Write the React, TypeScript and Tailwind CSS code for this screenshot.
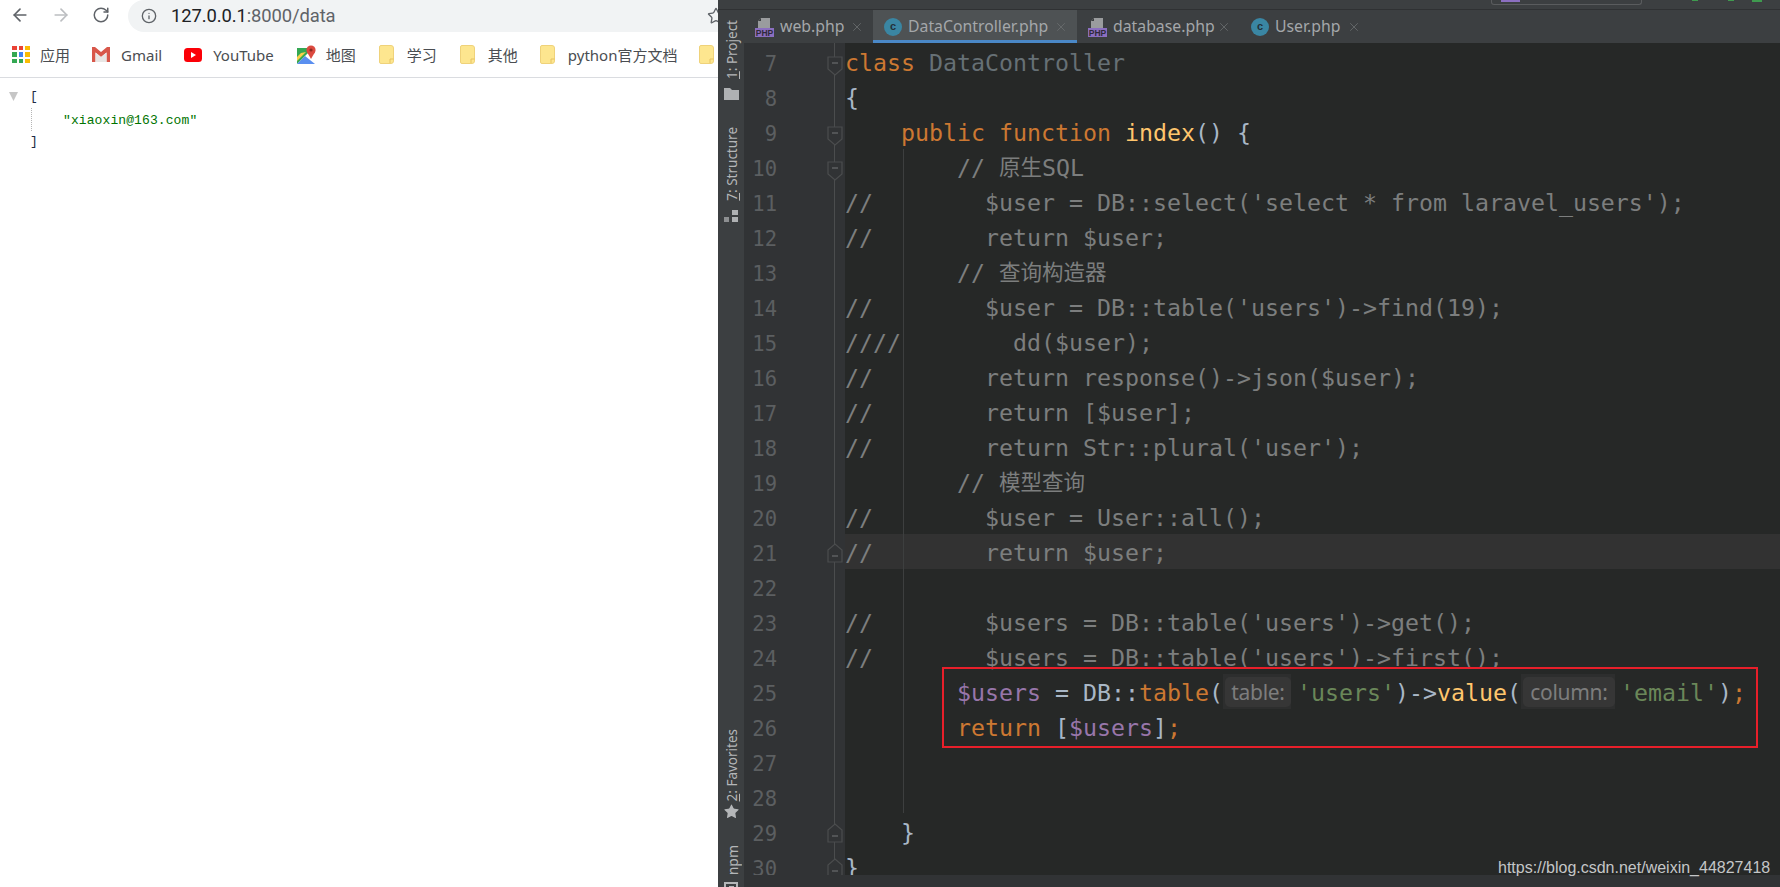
import React from 'react';
import { ArrowLeft, ArrowRight, RotateCw, Info, Star, X } from 'lucide-react';

type Token = [string, string];

const CM = 'text-[#7c7e7e]';
const KW = 'text-[#cc7832]';
const CL = 'text-[#667075]';
const FN = 'text-[#ffc66d]';
const OP = 'text-[#a9b7c6]';
const VR = 'text-[#9876aa]';
const ST = 'text-[#6a8759]';
const CJK = 'text-[21.5px] text-[#7c7e7e]';

const comment = (text: string): Token[] => [[CM, text]];

const codeLines: { n: number; tokens: Token[]; fold?: 'open' | 'close' }[] = [
  { n: 7, fold: 'open', tokens: [[KW, 'class '], [CL, 'DataController']] },
  { n: 8, tokens: [[OP, '{']] },
  { n: 9, fold: 'open', tokens: [[KW, '    public function '], [FN, 'index'], [OP, '() {']] },
  { n: 10, fold: 'open', tokens: [[CM, '        // '], [CJK, '原生'], [CM, 'SQL']] },
  { n: 11, tokens: comment("//        $user = DB::select('select * from laravel_users');") },
  { n: 12, tokens: comment('//        return $user;') },
  { n: 13, tokens: [[CM, '        // '], [CJK, '查询构造器']] },
  { n: 14, tokens: comment("//        $user = DB::table('users')->find(19);") },
  { n: 15, tokens: comment('////        dd($user);') },
  { n: 16, tokens: comment('//        return response()->json($user);') },
  { n: 17, tokens: comment('//        return [$user];') },
  { n: 18, tokens: comment("//        return Str::plural('user');") },
  { n: 19, tokens: [[CM, '        // '], [CJK, '模型查询']] },
  { n: 20, tokens: comment('//        $user = User::all();') },
  { n: 21, fold: 'close', tokens: comment('//        return $user;') },
  { n: 22, tokens: [] },
  { n: 23, tokens: comment("//        $users = DB::table('users')->get();") },
  { n: 24, tokens: comment("//        $users = DB::table('users')->first();") },
  {
    n: 25,
    tokens: [
      [VR, '        $users'],
      [OP, ' = DB::'],
      [KW, 'table'],
      [OP, '('],
      ['inlay-table', 'table:'],
      [ST, "'users'"],
      [OP, ')->'],
      [FN, 'value'],
      [OP, '('],
      ['inlay-column', 'column:'],
      [ST, "'email'"],
      [OP, ')'],
      [KW, ';'],
    ],
  },
  { n: 26, tokens: [[KW, '        return '], [OP, '['], [VR, '$users'], [OP, ']'], [KW, ';']] },
  { n: 27, tokens: [] },
  { n: 28, tokens: [] },
  { n: 29, fold: 'close', tokens: [[OP, '    }']] },
  { n: 30, fold: 'close', tokens: [[OP, '}']] },
];

const FoldIcon = ({ kind }: { kind: 'open' | 'close' }) =>
  kind === 'open' ? (
    <svg width="16" height="20" viewBox="0 0 16 20" className="mt-[12px] ml-[50px]">
      <path d="M1 1H15V13L8 19L1 13Z" fill="#313335" stroke="#4b4d4e" strokeWidth="1.2" />
      <path d="M5 7H11" stroke="#6a6c6d" strokeWidth="1.2" />
    </svg>
  ) : (
    <svg width="16" height="20" viewBox="0 0 16 20" className="mt-[9px] ml-[50px]">
      <path d="M1 19H15V7L8 1L1 7Z" fill="#313335" stroke="#4b4d4e" strokeWidth="1.2" />
      <path d="M5 13H11" stroke="#6a6c6d" strokeWidth="1.2" />
    </svg>
  );

const PhpIcon = () => (
  <div className="relative h-[20px] w-[19px] shrink-0">
    <svg width="19" height="20" viewBox="0 0 19 20">
      <path d="M6 1H15V12H3V4Z" fill="#9a9c9e" />
      <path d="M6 1V4H3Z" fill="#3c3f41" />
      <rect x="0" y="11" width="19" height="9" fill="#8b6fc0" />
      <text x="9.5" y="19" textAnchor="middle" fontSize="8.5" fontFamily="'Liberation Sans', sans-serif" fontWeight="700" fill="#2f2a3a">
        PHP
      </text>
    </svg>
  </div>
);

const ClassIcon = () => (
  <div className="flex h-[18px] w-[18px] shrink-0 items-center justify-center rounded-full bg-[#3a86a3] text-[11px] leading-none font-bold text-[#23313a] [font-family:'Liberation_Sans',sans-serif]">
    c
  </div>
);

const Tab = ({ label, php, active, width }: { label: string; php?: boolean; active?: boolean; width: string }) => (
  <div
    className={`flex h-full items-center justify-between pr-[9px] pl-[11px] ${width} ${
      active ? 'border-b-[3px] border-[#4a88c7] bg-[#4e5254] pt-[3px]' : ''
    }`}
  >
    <div className="flex items-center gap-[6px]">
      {php ? <PhpIcon /> : <ClassIcon />}
      <span className="text-[15.8px] text-[#a4a7aa]">{label}</span>
    </div>
    <X size={14} strokeWidth={1.4} className="text-[#6b6e70]" />
  </div>
);

const VerticalLabel = ({ num, text }: { num: string; text: string }) => (
  <span className="ml-[4px] shrink-0 rotate-180 text-[13.5px] leading-none whitespace-nowrap text-[#b4b6b8] [writing-mode:vertical-rl]">
    <span className="underline">{num}</span>
    {text}
  </span>
);

const Sidebar = () => (
  <div className="flex h-[877px] w-[26px] shrink-0 flex-col items-center overflow-hidden bg-[#3c3f41] pt-[10px]">
    <VerticalLabel num="1" text=": Project" />
    <svg width="15" height="12" viewBox="0 0 15 12" className="mt-[9px] shrink-0">
      <path d="M0 0H6L8 2H15V12H0Z" fill="#afb1b3" />
    </svg>
    <div className="mt-[27px] flex shrink-0">
      <VerticalLabel num="7" text=": Structure" />
    </div>
    <svg width="14" height="12" viewBox="0 0 14 12" className="mt-[9px] shrink-0">
      <rect x="8" y="0" width="6" height="5" fill="#afb1b3" />
      <rect x="0" y="7" width="5" height="5" fill="#8d8f91" />
      <rect x="8" y="7" width="6" height="5" fill="#afb1b3" />
    </svg>
    <div className="mt-[507px] flex shrink-0">
      <VerticalLabel num="2" text=": Favorites" />
    </div>
    <Star size={17} fill="#b4b6b8" strokeWidth={0} className="mt-[2px] shrink-0 text-[#b4b6b8]" />
    <div className="mt-[25px] flex shrink-0">
      <span className="ml-[4px] rotate-180 text-[14px] leading-none text-[#b4b6b8] [writing-mode:vertical-rl]">npm</span>
    </div>
    <div className="mt-[6px] flex h-[14px] w-[14px] shrink-0 items-center justify-center border-2 border-[#b4b6b8]">
      <div className="h-[5px] w-[5px] bg-[#b4b6b8]" />
    </div>
  </div>
);

const Inlay = ({ label, outer, inner }: { label: string; outer: string; inner: string }) => (
  <span className={`flex h-[35px] items-start ${outer}`}>
    <span className="flex h-[35px] items-start bg-[#2d2e2e] pt-[3px] pl-[2px]">
      <span
        className={`flex h-[30px] items-center justify-center rounded-[5px] bg-[#363636] text-[21px] tracking-[-0.3px] text-[#7d7d7d] [font-family:'Noto_Sans',sans-serif] ${inner}`}
      >
        {label}
      </span>
    </span>
  </span>
);

const CodeRow = ({ n, tokens }: { n: number; tokens: Token[] }) => (
  <div
    className={`flex h-[35px] items-start text-[23.25px] leading-[35px] whitespace-pre ${
      n === 21 ? 'bg-[#323232]' : ''
    }`}
  >
    {tokens.map(([cls, text], i) => {
      if (cls === 'inlay-table') return <Inlay key={i} label={text} outer="w-[74px]" inner="w-[66px]" />;
      if (cls === 'inlay-column') return <Inlay key={i} label={text} outer="w-[99px]" inner="w-[92px]" />;
      return (
        <span key={i} className={`mt-px ${cls}`}>
          {text}
        </span>
      );
    })}
  </div>
);

const Editor = () => (
  <div className="flex min-h-0 flex-1 overflow-hidden bg-[#262827] [font-family:'DejaVu_Sans_Mono','Noto_Sans_CJK_SC',monospace]">
    <div className="relative w-[101px] shrink-0 bg-[#313335] pt-px">
      <div className="absolute top-0 bottom-0 left-[90px] w-px bg-[#4b4d4e]" />
      {codeLines.map(l => (
        <div key={l.n} className="relative flex h-[35px] items-start">
          <span className="mt-[3px] w-[33px] text-right text-[20.5px] leading-[35px] text-[#5c5f61]">{l.n}</span>
          {l.fold && <FoldIcon kind={l.fold} />}
        </div>
      ))}
    </div>
    <div className="relative flex-1 pt-px">
      {codeLines.map(l => (
        <CodeRow key={l.n} n={l.n} tokens={l.tokens} />
      ))}
      <div className="absolute top-[106px] left-[58px] h-[664px] w-px bg-[#3d3f3f]" />
    </div>
  </div>
);

const Ide = () => (
  <div className="flex h-full min-w-0 flex-1 flex-col bg-[#3c3f41] [font-family:'Noto_Sans',sans-serif]">
    <div className="flex h-[10px] shrink-0 items-start justify-end border-b border-[#2f3133] pr-[18px]">
      <div className="flex h-[5px] w-[151px] items-end rounded-b-[3px] border-r border-b border-l border-[#5a5c5e] pl-[9px]">
        <div className="mb-[2px] h-[2px] w-[19px] bg-[#8b6fc0]" />
      </div>
      <div className="ml-[50px] h-px w-[6px] bg-[#3f9a4f]" />
      <div className="ml-[30px] h-px w-[6px] bg-[#3f9a4f]" />
      <div className="ml-[18px] h-[2px] w-[10px] bg-[#3f9a4f]" />
    </div>
    <div className="flex min-h-0 flex-1">
      <Sidebar />
      <div className="flex min-w-0 flex-1 flex-col">
        <div className="flex h-[33px] shrink-0 bg-[#3c3f41]">
          <Tab label="web.php" php width="w-[129px]" />
          <Tab label="DataController.php" active width="w-[204px]" />
          <Tab label="database.php" php width="w-[163px]" />
          <Tab label="User.php" width="w-[130px]" />
        </div>
        <Editor />
        <div className="h-[12px] shrink-0 overflow-hidden bg-[#313335] pt-[9px] pl-[101px] text-[15px] leading-[20px] text-[#8a8c8e]">
          \App\Http\Controllers  DataController  index()
        </div>
      </div>
    </div>
  </div>
);

const BookmarkText = ({ children }: { children: React.ReactNode }) => (
  <span className="text-[15px] whitespace-nowrap text-[#4a4d51]">{children}</span>
);

const Folder = () => (
  <svg width="15" height="19" viewBox="0 0 15 19" className="shrink-0">
    <path d="M2 0.5H12Q14.5 0.5 14.5 3V16Q14.5 18.5 12 18.5H2Q0.5 18.5 0.5 17V2Q0.5 0.5 2 0.5Z" fill="#fde68f" stroke="#efd27a" />
    <path d="M11 18V14H14.5" fill="none" stroke="#e6c262" />
  </svg>
);

const AppsIcon = () => {
  const colors = ['#ea4335', '#ea4335', '#fbbc04', '#34a853', '#4285f4', '#fbbc04', '#34a853', '#34a853', '#fbbc04'];
  return (
    <div className="grid h-[17px] w-[18px] shrink-0 grid-cols-3 gap-[2px]">
      {colors.map((c, i) => (
        <div key={i} style={{ backgroundColor: c }} />
      ))}
    </div>
  );
};

const GmailIcon = () => (
  <svg width="18" height="15" viewBox="0 0 18 15" className="shrink-0">
    <path d="M0 0H3L9 5L15 0H18V15H14.5V5.5L9 10L3.5 5.5V15H0Z" fill="#d8574a" />
    <path d="M3.5 5.5L9 10L14.5 5.5V15H3.5Z" fill="#e8e6e4" />
  </svg>
);

const YoutubeIcon = () => (
  <svg width="18" height="14" viewBox="0 0 18 14" className="shrink-0">
    <rect width="18" height="14" rx="3.5" fill="#fb0007" />
    <path d="M7 4L12 7L7 10Z" fill="#fff" />
  </svg>
);

const MapsIcon = () => (
  <svg width="19" height="19" viewBox="0 0 19 19" className="shrink-0">
    <path d="M0 3H11V8L0 19Z" fill="#34a853" />
    <path d="M0 19L8 11L18 19Z" fill="#5a8ff0" />
    <path d="M4 8L0 12V16L9 7Z" fill="#fbd04a" />
    <circle cx="14" cy="5" r="4.6" fill="#db4a3f" />
    <path d="M10 7L14 14L18 7Z" fill="#db4a3f" />
    <circle cx="14" cy="5" r="1.6" fill="#8e2a22" />
  </svg>
);

const Browser = () => (
  <div className="flex h-full w-[718px] shrink-0 flex-col overflow-hidden bg-white [font-family:'Noto_Sans','Noto_Sans_CJK_SC',sans-serif]">
    <div className="flex h-[32px] shrink-0 items-start">
      <div className="flex h-[30px] items-center pl-[10px]">
        <ArrowLeft size={20} strokeWidth={2} className="text-[#5f6368]" />
        <ArrowRight size={20} strokeWidth={2} className="ml-[21px] text-[#bcbec1]" />
        <RotateCw size={18} strokeWidth={2} className="ml-[21px] text-[#5f6368]" />
      </div>
      <div className="ml-[18px] flex h-[32px] flex-1 items-center rounded-l-[16px] bg-[#f1f3f4] pl-[13px]">
        <Info size={16} strokeWidth={2} className="text-[#5f6368]" />
        <span className="ml-[14px] text-[18.4px] tracking-[-0.1px] [font-family:'Roboto',sans-serif]">
          <span className="text-[#202124]">127.0.0.1</span>
          <span className="text-[#5f6368]">:8000/data</span>
        </span>
        <Star size={18} strokeWidth={1.8} className="mr-[-7px] ml-auto text-[#5f6368]" />
      </div>
    </div>
    <div className="flex h-[46px] shrink-0 items-center border-b border-[#dadce0] pl-[12px]">
      <AppsIcon />
      <div className="ml-[10px]"><BookmarkText>应用</BookmarkText></div>
      <div className="ml-[22px]"><GmailIcon /></div>
      <div className="ml-[11px]"><BookmarkText>Gmail</BookmarkText></div>
      <div className="ml-[22px]"><YoutubeIcon /></div>
      <div className="ml-[11px]"><BookmarkText>YouTube</BookmarkText></div>
      <div className="ml-[23px]"><MapsIcon /></div>
      <div className="ml-[10px]"><BookmarkText>地图</BookmarkText></div>
      <div className="ml-[23px]"><Folder /></div>
      <div className="ml-[13px]"><BookmarkText>学习</BookmarkText></div>
      <div className="ml-[23px]"><Folder /></div>
      <div className="ml-[13px]"><BookmarkText>其他</BookmarkText></div>
      <div className="ml-[22px]"><Folder /></div>
      <div className="ml-[13px]"><BookmarkText>python官方文档</BookmarkText></div>
      <div className="ml-[22px]"><Folder /></div>
    </div>
    <div className="pt-[8px] pl-[9px] text-[13px] leading-[21.5px] [font-family:'Liberation_Mono',monospace]">
      <div className="flex items-center">
        <svg width="9" height="9" viewBox="0 0 9 9">
          <path d="M0 0H9L4.5 9Z" fill="#c6c6c6" />
        </svg>
        <span className="ml-[12px] text-[#1f2a44]">[</span>
      </div>
      <div className="ml-[22px] border-l border-dotted border-[#b5b5b5] pt-[2px] pl-[31px] tracking-[0.1px] text-[#007400]">
        "xiaoxin@163.com"
      </div>
      <div className="ml-[21px] text-[#1f2a44]">]</div>
    </div>
  </div>
);

export default function App() {
  return (
    <div className="relative flex h-[887px] w-[1780px] overflow-hidden">
      <Browser />
      <Ide />
      {/* annotation drawn on top of the screenshot */}
      <div className="absolute top-[667px] left-[942px] h-[81px] w-[816px] border-2 border-[#e81f2a]" />
      <div className="absolute top-[857px] left-[1498px] text-[16px] leading-[22px] text-[#c4c6c7] [font-family:'Liberation_Sans',sans-serif]">
        https://blog.csdn.net/weixin_44827418
      </div>
    </div>
  );
}
